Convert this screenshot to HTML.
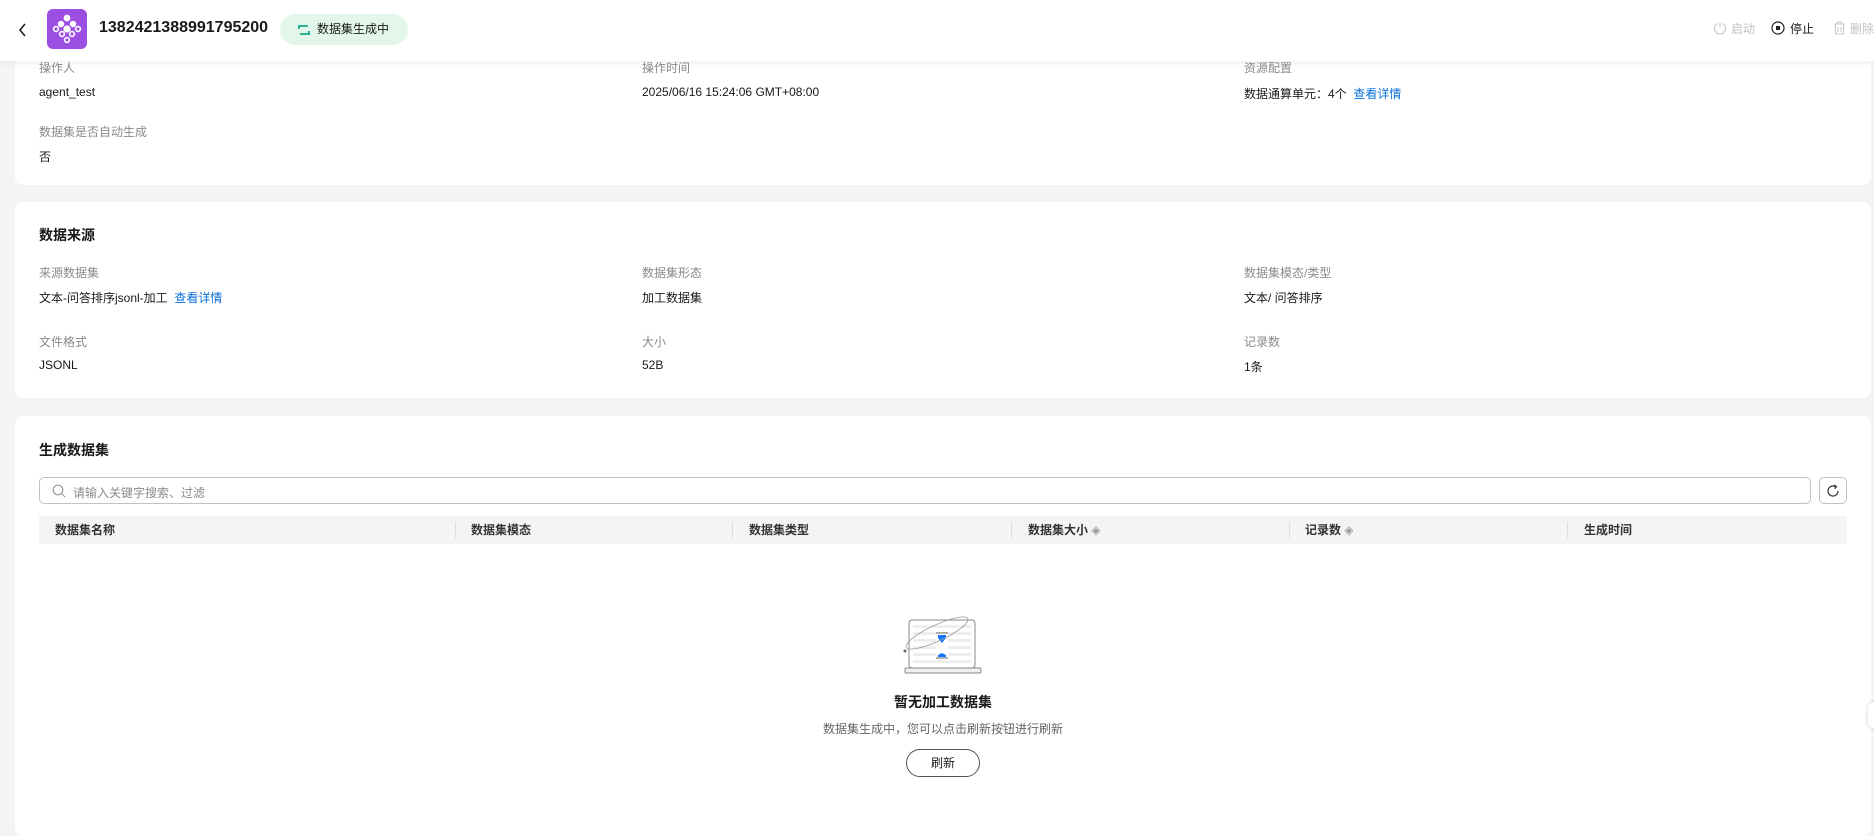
<!DOCTYPE html>
<html><head><meta charset="utf-8"><style>
*{box-sizing:border-box;margin:0;padding:0}
body{width:1874px;height:813px;overflow:hidden;background:#f4f4f4;font-family:"Liberation Sans","Noto Sans CJK SC",sans-serif;font-size:12px;color:#191919;position:relative}
.a{position:absolute;white-space:nowrap}
.card{position:absolute;background:#fff;border-radius:8px;left:15px;width:1856px}
.lb{color:#8a8a8a}
.h{font-size:14px;font-weight:bold}
.th{position:absolute;top:0;height:28px;line-height:28px;font-weight:bold;color:#333}
.sep{position:absolute;top:6px;width:1px;height:16px;background:#ddd}
.link{color:#0a6fd8}
</style></head><body>
<div class="card" style="top:-10px;height:195px">
<div class="a lb" style="left:24px;top:69px">操作人</div>
<div class="a" style="left:24px;top:95px">agent_test</div>
<div class="a lb" style="left:627px;top:69px">操作时间</div>
<div class="a" style="left:627px;top:95px">2025/06/16 15:24:06 GMT+08:00</div>
<div class="a lb" style="left:1229px;top:69px">资源配置</div>
<div class="a" style="left:1229px;top:95px">数据通算单元：4个 <span class="link">&nbsp;查看详情</span></div>
<div class="a lb" style="left:24px;top:133px">数据集是否自动生成</div>
<div class="a" style="left:24px;top:158px">否</div>
</div>
<div class="card" style="top:202px;height:196px">
<div class="a h" style="left:24px;top:23px">数据来源</div>
<div class="a lb" style="left:24px;top:62px">来源数据集</div>
<div class="a" style="left:24px;top:87px">文本-问答排序jsonl-加工 <span class="link">&nbsp;查看详情</span></div>
<div class="a lb" style="left:627px;top:62px">数据集形态</div>
<div class="a" style="left:627px;top:87px">加工数据集</div>
<div class="a lb" style="left:1229px;top:62px">数据集模态/类型</div>
<div class="a" style="left:1229px;top:87px">文本/ 问答排序</div>
<div class="a lb" style="left:24px;top:131px">文件格式</div>
<div class="a" style="left:24px;top:156px">JSONL</div>
<div class="a lb" style="left:627px;top:131px">大小</div>
<div class="a" style="left:627px;top:156px">52B</div>
<div class="a lb" style="left:1229px;top:131px">记录数</div>
<div class="a" style="left:1229px;top:156px">1条</div>
</div>
<div class="card" style="top:416px;height:420px">
<div class="a h" style="left:24px;top:24px">生成数据集</div>
<div class="a" style="left:24px;top:61px;width:1772px;height:27px;border:1px solid #c2c2c2;border-radius:5px">
<svg class="a" style="left:12px;top:6px" width="14" height="14" viewBox="0 0 14 14"><circle cx="6" cy="6" r="4.8" fill="none" stroke="#999" stroke-width="1.2"/><path d="M9.5 9.5L13 13" stroke="#999" stroke-width="1.2"/></svg>
<div class="a lb" style="left:33px;top:6px">请输入关键字搜索、过滤</div></div>
<div class="a" style="left:1804px;top:61px;width:28px;height:27px;border:1px solid #c2c2c2;border-radius:5px">
<svg class="a" style="left:6px;top:6px" width="14" height="14" viewBox="0 0 14 14"><path d="M12 7A5 5 0 1 1 9.5 2.7" fill="none" stroke="#333" stroke-width="1.2"/><path d="M8 1l2.5 1.7-1.8 2" fill="none" stroke="#333" stroke-width="1.2"/></svg></div>
<div class="a" style="left:24px;top:100px;width:1808px;height:28px;background:#f4f4f4">
<div class="th" style="left:16px">数据集名称</div><div class="sep" style="left:416px"></div>
<div class="th" style="left:432px">数据集模态</div><div class="sep" style="left:693px"></div>
<div class="th" style="left:710px">数据集类型</div><div class="sep" style="left:972px"></div>
<div class="th" style="left:989px">数据集大小 <span style="color:#999;font-weight:normal">◈</span></div><div class="sep" style="left:1250px"></div>
<div class="th" style="left:1266px">记录数 <span style="color:#999;font-weight:normal">◈</span></div><div class="sep" style="left:1528px"></div>
<div class="th" style="left:1545px">生成时间</div>
</div>
<svg class="a" style="left:885px;top:196px" width="100" height="66" viewBox="0 0 100 66">
<rect x="9" y="8" width="66" height="48" rx="3" fill="#fff" stroke="#888" stroke-width="1"/>
<g fill="#eee"><rect x="13" y="13" width="58" height="3"/><rect x="13" y="20" width="58" height="3"/><rect x="13" y="27" width="58" height="3"/><rect x="13" y="34" width="58" height="3"/><rect x="13" y="41" width="58" height="3"/><rect x="13" y="48" width="58" height="3"/></g>
<rect x="5" y="56" width="76" height="5" rx="1" fill="#f0f0f0" stroke="#888" stroke-width="1"/>
<rect x="36" y="21" width="12" height="25" fill="#fff"/>
<path d="M36 21h12M36 46h12" stroke="#666"/>
<path d="M38 23h8v3l-4 5-4-5z" fill="#1476ff"/><path d="M38 45h8v-2l-4-2-4 2z" fill="#1476ff"/>
<ellipse cx="37" cy="21" rx="34" ry="8" transform="rotate(-25 37 21)" fill="none" stroke="#999" stroke-width=".8"/>
<circle cx="5" cy="39" r="1.5" fill="#666"/>
</svg>
<div class="a" style="left:0;width:1856px;text-align:center;top:276px;font-size:14px;font-weight:bold">暂无加工数据集</div>
<div class="a lb" style="left:0;width:1856px;text-align:center;top:304px;color:#666">数据集生成中，您可以点击刷新按钮进行刷新</div>
<div class="a" style="left:891px;top:333px;width:74px;height:28px;border:1px solid #555;border-radius:14px;text-align:center;line-height:26px">刷新</div>
</div>
<div class="a" style="left:0;top:0;width:1874px;height:61px;background:#fff;box-shadow:0 2px 6px rgba(0,0,0,.06)">
<svg class="a" style="left:17px;top:22px" width="10" height="16" viewBox="0 0 10 16"><path d="M8 2L3 8l5 6" fill="none" stroke="#222" stroke-width="1.6"/></svg>
<div class="a" style="left:47px;top:9px;width:40px;height:40px;border-radius:6px;background:#9d4ee2">
<svg width="40" height="40" viewBox="0 0 40 40" fill="none" stroke="#fff" stroke-width="1.6"><circle cx="20" cy="9" r="2.6" fill="#fff"/><circle cx="14" cy="15" r="2.4" fill="#fff"/><circle cx="26" cy="15" r="2.4" fill="#fff"/><circle cx="9" cy="20" r="2.4"/><circle cx="20" cy="20" r="2.8" fill="#fff"/><circle cx="31" cy="20" r="2.4"/><circle cx="15" cy="25" r="2.4"/><circle cx="25" cy="25" r="2.4"/><circle cx="20" cy="31" r="2.4"/></svg></div>
<div class="a" style="left:99px;top:19px;font-size:16px;font-weight:bold">1382421388991795200</div>
<div class="a" style="left:280px;top:14px;width:128px;height:31px;border-radius:16px;background:#e3f6ea;font-size:12px;line-height:31px;padding-left:37px">
<svg class="a" style="left:18px;top:10px" width="12" height="12" viewBox="0 0 12 12" fill="none" stroke="#17a98a" stroke-width="1.8"><path d="M1 5V2h9M11 7v3H2"/></svg>数据集生成中</div>
<svg class="a" style="left:1713px;top:21px" width="14" height="14" viewBox="0 0 14 14" fill="none" stroke="#c8c8c8" stroke-width="1.1"><path d="M4.5 2.5A5.5 5.5 0 1 0 9.5 2.5M7 1v5"/></svg>
<div class="a" style="left:1731px;top:20px;color:#c0c0c0">启动</div>
<svg class="a" style="left:1771px;top:21px" width="14" height="14" viewBox="0 0 14 14"><circle cx="7" cy="7" r="6" fill="none" stroke="#222" stroke-width="1.2"/><rect x="5" y="5" width="4" height="4" fill="#222"/></svg>
<div class="a" style="left:1790px;top:20px">停止</div>
<svg class="a" style="left:1833px;top:21px" width="13" height="14" viewBox="0 0 13 14" fill="none" stroke="#c8c8c8" stroke-width="1.1"><path d="M1 3h11M4.5 3V1h4v2M2.5 3v10h8V3M5 6v5M8 6v5"/></svg>
<div class="a" style="left:1850px;top:20px;color:#c0c0c0">删除</div>
</div>
<div class="a" style="left:1868px;top:702px;width:12px;height:26px;border-radius:6px;background:#fff;box-shadow:0 0 4px rgba(0,0,0,.2)"></div>
</body></html>
